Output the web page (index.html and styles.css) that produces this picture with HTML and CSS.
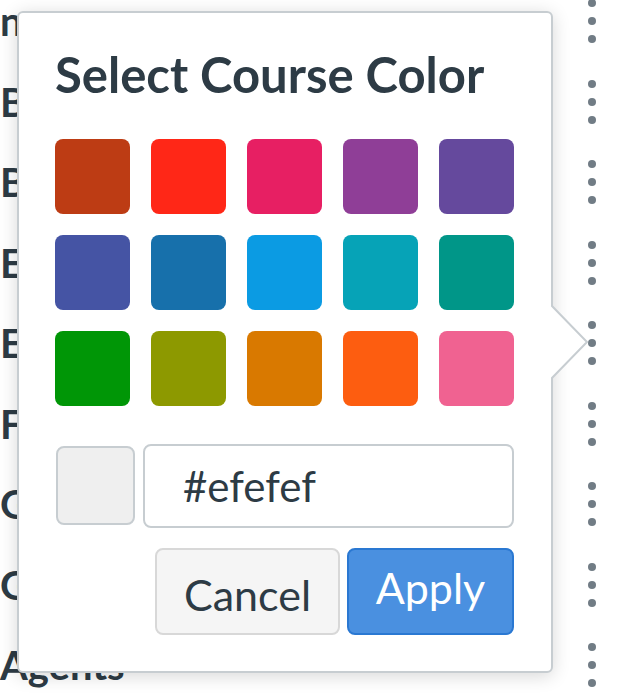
FILE: index.html
```html
<!DOCTYPE html>
<html lang="en">
<head>
  <meta charset="UTF-8">
  <meta name="viewport" content="width=device-width, initial-scale=1.0">
  <title>Select Course Color</title>
  <link rel="stylesheet" href="styles.css">
</head>
<body>
  <ul class="course-list">
    <li class="course-row"><span class="course-name">nurses</span><span class="kebab"><i></i><i></i><i></i></span></li>
    <li class="course-row"><span class="course-name">Biology</span><span class="kebab"><i></i><i></i><i></i></span></li>
    <li class="course-row"><span class="course-name">Business</span><span class="kebab"><i></i><i></i><i></i></span></li>
    <li class="course-row"><span class="course-name">English</span><span class="kebab"><i></i><i></i><i></i></span></li>
    <li class="course-row"><span class="course-name">Economics</span><span class="kebab"><i></i><i></i><i></i></span></li>
    <li class="course-row"><span class="course-name">French</span><span class="kebab"><i></i><i></i><i></i></span></li>
    <li class="course-row"><span class="course-name">Geography</span><span class="kebab"><i></i><i></i><i></i></span></li>
    <li class="course-row"><span class="course-name">German</span><span class="kebab"><i></i><i></i><i></i></span></li>
    <li class="course-row"><span class="course-name">Agents</span><span class="kebab"><i></i><i></i><i></i></span></li>
  </ul>

  <div class="color-popover">
    <h2 class="popover-title">Select Course Color</h2>

    <div class="swatches">
      <button class="swatch" style="background-color: #BD3C14"></button>
      <button class="swatch" style="background-color: #FF2717"></button>
      <button class="swatch" style="background-color: #E71F63"></button>
      <button class="swatch" style="background-color: #8F3E97"></button>
      <button class="swatch" style="background-color: #65499D"></button>
      <button class="swatch" style="background-color: #4554A4"></button>
      <button class="swatch" style="background-color: #1770AB"></button>
      <button class="swatch" style="background-color: #0B9BE3"></button>
      <button class="swatch" style="background-color: #06A3B7"></button>
      <button class="swatch" style="background-color: #009688"></button>
      <button class="swatch" style="background-color: #009606"></button>
      <button class="swatch" style="background-color: #8D9900"></button>
      <button class="swatch" style="background-color: #D97900"></button>
      <button class="swatch" style="background-color: #FD5D10"></button>
      <button class="swatch" style="background-color: #F06291"></button>
    </div>

    <div class="custom-color">
      <div class="preview"></div>
      <input type="text" class="hex-input" value="#efefef">
    </div>

    <div class="actions">
      <button class="btn btn-cancel">Cancel</button>
      <button class="btn btn-apply">Apply</button>
    </div>

    <svg class="caret" width="38" height="76" viewBox="0 0 38 76">
      <path d="M0 1 L36 38 L0 75" fill="#fff" stroke="#c7cdd1" stroke-width="2"/>
    </svg>
  </div>
</body>
</html>
```

FILE: styles.css
```css
body {
  margin: 0;
  font-family: Lato, "Noto Sans", sans-serif;
  background-color: #fff;
  color: #2d3b45;
  overflow: hidden;
}

.course-list {
  list-style: none;
  margin: -19px 0 0 0;
  padding: 0;
}

.course-row {
  height: 80.5px;
  display: flex;
  align-items: center;
  justify-content: space-between;
  padding-right: 38px;
}

.course-name {
  font-size: 40px;
  font-weight: 700;
  line-height: 1.2;
}

.kebab {
  display: flex;
  flex-direction: column;
  gap: 10px;
}

.kebab i {
  display: block;
  width: 8px;
  height: 8px;
  border-radius: 50%;
  background-color: #717c85;
}

.color-popover {
  position: absolute;
  left: 17px;
  top: 11px;
  width: 536px;
  box-sizing: border-box;
  padding: 32px 37px 36px 36px;
  background-color: #fff;
  border: 2px solid #c7cdd1;
  border-radius: 6px;
  box-shadow: 0 3px 18px rgba(0, 0, 0, 0.16);
}

.popover-title {
  margin: 0 0 35px 0;
  font-size: 49px;
  font-weight: 700;
  line-height: 1.2;
  color: #2d3b45;
}

.swatches {
  display: grid;
  grid-template-columns: repeat(5, 75px);
  grid-auto-rows: 75px;
  gap: 21px;
}

.swatch {
  border: none;
  border-radius: 8px;
  padding: 0;
  cursor: pointer;
}

.custom-color {
  display: flex;
  align-items: center;
  gap: 8px;
  margin-top: 38px;
}

.preview {
  flex: 0 0 79px;
  height: 79px;
  box-sizing: border-box;
  margin-left: 1px;
  background-color: #efefef;
  border: 2px solid #c7cdd1;
  border-radius: 8px;
}

.hex-input {
  flex: 1;
  min-width: 0;
  height: 84px;
  box-sizing: border-box;
  padding: 0 0 0 38px;
  border: 2px solid #c7cdd1;
  border-radius: 8px;
  font-family: Lato, "Noto Sans", sans-serif;
  font-size: 42px;
  color: #2d3b45;
}

.actions {
  display: flex;
  justify-content: flex-end;
  gap: 7px;
  margin-top: 20px;
}

.btn {
  height: 87px;
  box-sizing: border-box;
  border-radius: 8px;
  font-family: Lato, "Noto Sans", sans-serif;
  font-size: 43px;
  cursor: pointer;
}

.btn-cancel {
  width: 185px;
  padding: 6px 0 0 0;
  background-color: #f5f5f5;
  border: 2px solid #d8d8d8;
  color: #2d3b45;
}

.btn-apply {
  width: 167px;
  padding: 0 0 8px 0;
  background-color: #4a90e0;
  border: 2px solid #2a78d2;
  color: #fff;
}

.caret {
  position: absolute;
  left: 100%;
  top: 291px;
  display: block;
}
```
